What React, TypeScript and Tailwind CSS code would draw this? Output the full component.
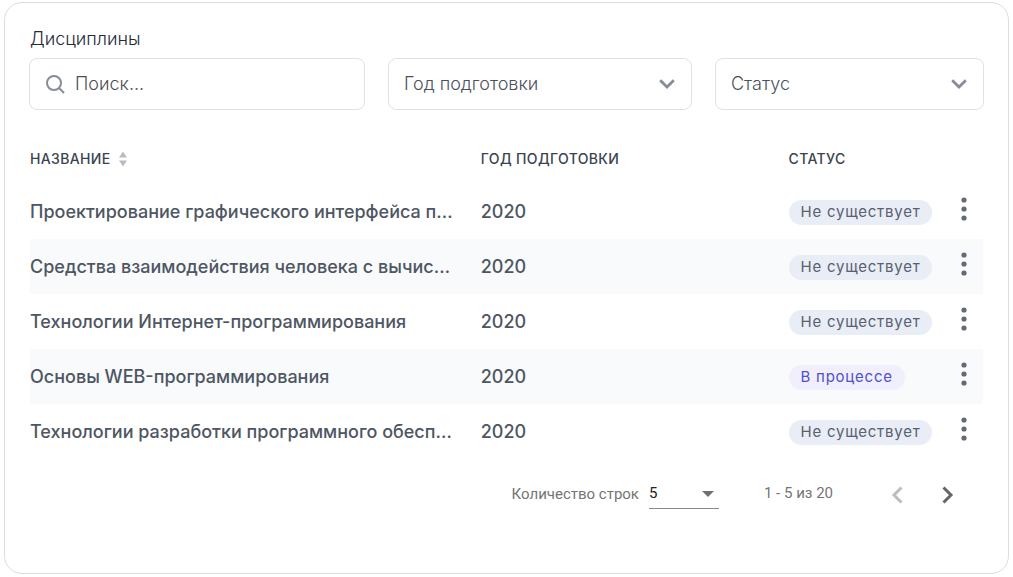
import { useState } from "react";

type Status = "none" | "progress";

const disciplines: { name: string; year: number; status: Status }[] = [
  { name: "Проектирование графического интерфейса пользователя", year: 2020, status: "none" },
  { name: "Средства взаимодействия человека с вычислительными системами", year: 2020, status: "none" },
  { name: "Технологии Интернет-программирования", year: 2020, status: "none" },
  { name: "Основы WEB-программирования", year: 2020, status: "progress" },
  { name: "Технологии разработки программного обеспечения", year: 2020, status: "none" },
];

const badges: Record<Status, { label: string; style: string }> = {
  none: { label: "Не существует", style: "bg-[#e8edf6] text-[#5a6070]" },
  progress: { label: "В процессе", style: "bg-[#f0effb] text-[#4f4fd0]" },
};

function FilterSelect({ label, options }: { label: string; options: string[] }) {
  return (
    <div className="grid min-w-0 items-center">
      <select
        aria-label={label}
        defaultValue=""
        className="col-start-1 row-start-1 h-[52px] w-full appearance-none rounded-lg border border-[#dfe1e4] bg-white pr-12 pl-[15px] text-lg font-light text-[#4b515a]"
      >
        <option value="">{label}</option>
        {options.map((option) => (
          <option key={option}>{option}</option>
        ))}
      </select>
      <svg
        viewBox="0 0 16 10"
        className="pointer-events-none col-start-1 row-start-1 mr-[17px] h-[10px] w-4 justify-self-end"
        fill="none"
        stroke="#868c98"
        strokeWidth="2.8"
        aria-hidden="true"
      >
        <path d="M1.200 1.200 8 8l6.800-6.800" />
      </svg>
    </div>
  );
}

export default function App() {
  const [rows, setRows] = useState("5");

  return (
    <div className="flex min-h-screen bg-white px-1 pt-[2px] pb-[3px] font-['Inter',sans-serif] text-[#454d59]">
      <main className="min-w-0 flex-1 rounded-[18px] border border-[#dcdddf] px-6 pt-6">
        <label htmlFor="search" className="block px-px text-lg leading-6 font-light text-[#252c38]">
          Дисциплины
        </label>

        <div className="mt-[7px] grid grid-cols-[336fr_304fr_269fr] gap-[23px]">
          <div className="flex h-[52px] min-w-0 items-center gap-[10px] rounded-lg border border-[#dfe1e4] px-[15px]">
            <svg viewBox="0 0 20 20" className="h-5 w-5 shrink-0" fill="none" stroke="#868c98" strokeWidth="2" aria-hidden="true">
              <circle cx="9" cy="9" r="7" />
              <path d="m14 14 5 5" />
            </svg>
            <input
              id="search"
              type="text"
              placeholder="Поиск..."
              className="min-w-0 flex-1 bg-transparent text-lg font-light text-[#454d59] outline-none placeholder:text-[#4f4f4f]"
            />
          </div>
          <FilterSelect label="Год подготовки" options={["2020", "2021", "2022"]} />
          <FilterSelect label="Статус" options={["Не существует", "В процессе"]} />
        </div>

        <div className="mt-6 px-px">
          <table className="w-full table-fixed border-collapse text-left">
            <colgroup>
              <col className="w-[47.3%]" />
              <col className="w-[32.3%]" />
              <col className="w-[16.4%]" />
              <col className="w-[4%]" />
            </colgroup>
            <thead className="text-sm tracking-wide text-[#3b434f]">
              <tr className="h-[50px]">
                <th scope="col" className="font-medium">
                  <button type="button" className="flex items-center gap-2">
                    НАЗВАНИЕ
                    <svg viewBox="0 0 8 16" className="h-4 w-2" fill="#b9bcc4" aria-hidden="true">
                      <path d="M4 0.500 8 6.500H0zM4 15.500 8 9.500H0z" />
                    </svg>
                  </button>
                </th>
                <th scope="col" className="font-medium">ГОД ПОДГОТОВКИ</th>
                <th scope="col" className="font-medium">СТАТУС</th>
                <th scope="col" aria-label="Действия" />
              </tr>
            </thead>
            <tbody className="text-[#4e5662]">
              {disciplines.map(({ name, year, status }) => (
                <tr key={name} className="h-[55px] even:bg-[#f8fafc]">
                  <td className="truncate pr-6 text-lg font-medium">{name}</td>
                  <td className="text-lg font-medium">{year}</td>
                  <td>
                    <span className={`inline-block rounded-full px-3 pb-px align-middle text-[15px] leading-6 tracking-wider ${badges[status].style}`}>
                      {badges[status].label}
                    </span>
                  </td>
                  <td className="pb-[6px]">
                    <button type="button" aria-label="Меню строки" className="mx-auto block">
                      <svg viewBox="0 0 6 24" className="h-6 w-[6px]" fill="#636a76" aria-hidden="true">
                        <circle cx="3" cy="3" r="2.600" />
                        <circle cx="3" cy="12" r="2.600" />
                        <circle cx="3" cy="21" r="2.600" />
                      </svg>
                    </button>
                  </td>
                </tr>
              ))}
            </tbody>
          </table>
        </div>

        <nav aria-label="Страницы" className="mt-5 flex items-center justify-end pr-[25px] font-['Roboto',sans-serif] text-[15px] text-[#757575]">
          <label htmlFor="rows">Количество строк</label>
          <div className="ml-[10px] grid w-[70px] items-center">
            <select
              id="rows"
              value={rows}
              onChange={(event) => setRows(event.target.value)}
              className="col-start-1 row-start-1 h-[30px] w-full appearance-none border-b border-[#8a8a8a] bg-transparent text-[#212121]"
            >
              <option>5</option>
              <option>10</option>
              <option>20</option>
            </select>
            <svg viewBox="0 0 12 6" className="pointer-events-none col-start-1 row-start-1 mr-[5px] h-[6px] w-3 justify-self-end" fill="#707070" aria-hidden="true">
              <path d="M0 0h12L6 6z" />
            </svg>
          </div>
          <span className="ml-[45px] pb-[2px]">1 - 5 из 20</span>
          <div className="ml-[53px] flex gap-[29px] pt-[2px]">
            <button type="button" disabled aria-label="Предыдущая страница" className="p-[5px]">
              <svg viewBox="0 0 12 18" className="h-[18px] w-3" fill="none" stroke="#bdbdbd" strokeWidth="3" aria-hidden="true">
                <path d="M10.500 1.500 3 9l7.500 7.500" />
              </svg>
            </button>
            <button type="button" aria-label="Следующая страница" className="p-[5px]">
              <svg viewBox="0 0 12 18" className="h-[18px] w-3" fill="none" stroke="#666666" strokeWidth="3" aria-hidden="true">
                <path d="M1.500 1.500 9 9l-7.500 7.500" />
              </svg>
            </button>
          </div>
        </nav>
      </main>
    </div>
  );
}
